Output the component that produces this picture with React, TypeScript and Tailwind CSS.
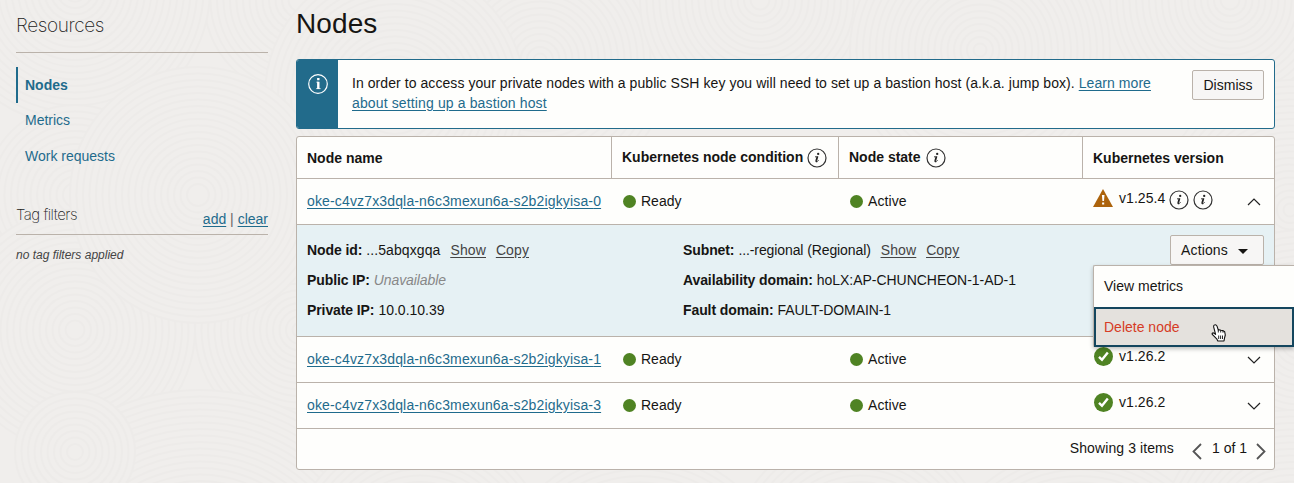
import React from "react";

const DISKS: [number, number, number][] = [
  [300, 0, 96], [75, -10, 135], [540, 60, 130], [760, 0, 120], [980, 50, 130], [1230, 0, 120],
  [395, 95, 130], [75, 195, 90], [1290, 210, 130], [300, 330, 105], [0, 330, 75],
  [75, 330, 120], [198, 195, 128], [1300, 340, 110], [200, 600, 210], [420, 560, 130], [640, 600, 150],
  [860, 560, 130], [1080, 600, 150], [1290, 540, 130], [75, 452, 60],
];

function Swirls() {
  return (
    <svg className="absolute inset-0 -z-10 h-full w-full" aria-hidden="true">
      {DISKS.map(([cx, cy, r], i) => (
        <g key={i} fill="#f0eeec" stroke="#edebe9" strokeWidth="2">
          {Array.from({ length: Math.floor(r / 6.5) }, (_, k) => (
            <circle key={k} cx={cx} cy={cy} r={r - k * 6.5} />
          ))}
        </g>
      ))}
    </svg>
  );
}

function Info() {
  return (
    <svg className="size-5 shrink-0" viewBox="0 0 20 20" fill="none">
      <circle cx="10" cy="10" r="9" stroke="#333" strokeWidth="1.2" />
      <circle cx="11.2" cy="5.9" r="1.15" fill="#222" />
      <path d="M8 9 9.4 8.5" stroke="#222" strokeWidth="0.9" />
      <path d="M10.5 8.2 9.3 12.6Q9.1 13.7 10 13.4" stroke="#222" strokeWidth="1.8" />
      <path d="M9.9 13.6Q10.9 13.3 11.7 12.2" stroke="#222" strokeWidth="0.8" />
    </svg>
  );
}

function Chevron({ up = false }: { up?: boolean }) {
  return (
    <svg className="h-2 w-[14px]" viewBox="0 0 14 8" fill="none" stroke="#222" strokeWidth="1.2">
      <path d={up ? "M1 7 7 1 13 7" : "M1 1 7 7 13 1"} />
    </svg>
  );
}

function Check() {
  return (
    <svg className="ml-px size-[19px]" viewBox="0 0 19 19">
      <circle cx="9.5" cy="9.5" r="9.5" fill="#4f8323" />
      <path d="m5 9.8 3 3L13.8 5.6" fill="none" stroke="#fff" strokeWidth="2.4" />
    </svg>
  );
}

function Warning() {
  return (
    <svg className="h-[18px] w-5" viewBox="0 0 20 18">
      <path d="M10 0 20 18H0Z" fill="#ac630c" />
      <path d="M8.9 6h2.6l-.5 6H9.4ZM9.1 13.4h2.1v2.1H9.1Z" fill="#fff" />
    </svg>
  );
}

function Status({ label }: { label: string }) {
  return (
    <span className="flex items-center gap-[5px]">
      <span className="size-[13px] rounded-full bg-[#4f8323]" />
      {label}
    </span>
  );
}

const COLS = "grid grid-cols-[314px_227px_244px_192px]";

function Row({ id, warn = false }: { id: string; warn?: boolean }) {
  return (
    <div className={`${COLS} h-[46px] items-center border-b border-[#bab2aa] pb-px`}>
      <a className="pl-[10px] tracking-[0.15px] text-[#1f6b8c] underline underline-offset-2">
        oke-c4vz7x3dqla-n6c3mexun6a-s2b2igkyisa-{id}
      </a>
      <div className="pl-[12px]"><Status label="Ready" /></div>
      <div className="pl-[12px] tracking-[0.1px]"><Status label="Active" /></div>
      <div className="flex items-center justify-between pr-[13px] pl-[11px]">
        <div className="flex items-center pb-[6px]">
          {warn ? <Warning /> : <Check />}
          <span className="ml-[6px] tracking-[0.05px]">v1.{warn ? "25.4" : "26.2"}</span>
          {warn && <span className="mt-[4px] ml-1 flex gap-1"><Info /><Info /></span>}
        </div>
        <div className="pt-px"><Chevron up={warn} /></div>
      </div>
    </div>
  );
}

function Field({ name, children }: { name: string; children: React.ReactNode }) {
  return (
    <div className="flex h-[30px] items-center gap-1 whitespace-nowrap">
      <b className="tracking-[-0.1px]">{name}:</b>
      {children}
    </div>
  );
}

function ShowCopy() {
  return (
    <span className="ml-[6px] flex gap-[10px] tracking-[0.1px] text-[#444] underline underline-offset-2">
      <a>Show</a>
      <a>Copy</a>
    </span>
  );
}

function Pointer() {
  return (
    <svg className="absolute top-[14px] left-[114px] h-[20px] w-[18px]" viewBox="0 0 18 20">
      <path
        d="M4.2 2.1C5.5 1.3 6.6 2 7 3.2L8.3 7 9 6.7 11 7.2 13 7.6 14.7 8.8 15.3 12 14.5 15.2 14 18H7.8L6.7 15.8 3 12.1C1 10.4 2.8 9.5 4.1 10.2L5.6 11.3 3.7 4.2Q3.3 2.7 4.2 2.1Z"
        fill="#fff" stroke="#111" strokeWidth="1.1" strokeLinejoin="round"
      />
      <path d="M8.3 7V9.5M10.7 7.2V9.5M13 7.7V9.7M8.7 12.5V16M10.6 12.5V16M12.5 12.5V16" stroke="#111" strokeWidth="0.9" />
    </svg>
  );
}

export default function App() {
  return (
    <div className="relative isolate flex h-[483px] w-[1294px] overflow-hidden bg-[#f0eeec] font-['Liberation_Sans',Arial,sans-serif] text-[14px] leading-5 text-[#161513]">
      <Swirls />
      <aside className="ml-4 w-[252px] shrink-0">
        <h2 className="h-[53px] border-b border-[#bab2aa] pt-[14px] font-['Inter','Roboto',sans-serif] text-[19px] leading-6 font-extralight tracking-[-0.4px] text-[#222]">
          Resources
        </h2>
        <nav className="mt-[14px] flex flex-col text-[#1f6b8c]">
          <a className="flex h-9 items-center border-l-2 border-[#1f6b8c] pl-[7px] font-bold">Nodes</a>
          <a className="flex h-9 items-center pb-[2px] pl-[9px]">Metrics</a>
          <a className="flex h-9 items-center pb-[2px] pl-[9px]">Work requests</a>
        </nav>
        <div className="mt-[29px] flex h-[31px] justify-between border-b border-[#bab2aa]">
          <h3 className="pt-px font-['Inter','Roboto',sans-serif] text-[15px] font-extralight tracking-[-0.5px] text-[#222]">Tag filters</h3>
          <div className="pt-[5px]">
            <a className="text-[#1f6b8c] underline underline-offset-2">add</a>
            <span className="text-[#666]"> | </span>
            <a className="text-[#1f6b8c] underline underline-offset-2">clear</a>
          </div>
        </div>
        <p className="mt-[10px] text-[12px] text-[#444] italic">no tag filters applied</p>
      </aside>

      <main className="ml-7 w-[979px] shrink-0">
        <h1 className="h-[59px] pt-[8px] text-[28px] leading-8 tracking-[0.1px]">Nodes</h1>
        <section className="flex h-[70px] overflow-hidden rounded-[3px] border border-[#226b8b] bg-[#fefefc]">
          <div className="flex w-[41px] justify-center bg-[#226b8b] pt-[14px]">
            <svg className="size-5" viewBox="0 0 20 20" fill="none" stroke="#fff">
              <circle cx="10" cy="10" r="9.3" strokeWidth="1.2" />
              <path d="M10.3 4v2.2M10.3 7.8V15" strokeWidth="2.4" />
              <path d="M8.4 8.2h2M8.2 14.6h4.4" strokeWidth="0.8" />
            </svg>
          </div>
          <p className="w-[854px] pt-[13px] pl-[14px] tracking-[0.065px]">
            <span>In order to access your private nodes with a public SSH key you will need to set up a bastion host (a.k.a. jump box). </span>
            <a className="text-[#1f6b8c] underline underline-offset-2">Learn more<br /><span className="tracking-[0.13px]">about setting up a bastion host</span></a>
          </p>
          <button className="mt-[10px] h-[30px] w-[72px] rounded-[2px] border border-[#bab2aa] bg-[#f7f6f5]">Dismiss</button>
        </section>

        <section className="mt-[7px] h-[334px] rounded-[3px] border border-[#bab2aa] bg-[#fefefc]">
          <div className={`${COLS} h-[42px] border-b border-[#bab2aa] font-bold`}>
            <div className="flex items-center pl-[10px]">Node name</div>
            <div className="flex items-center gap-1 border-l border-[#bab2aa] pl-[10px]"><span className="pb-[2px]">Kubernetes node condition</span><Info /></div>
            <div className="flex items-center gap-[5px] border-l border-[#bab2aa] pl-[10px]"><span className="pb-[2px]">Node state</span><Info /></div>
            <div className="flex items-center border-l border-[#bab2aa] pl-[10px]">Kubernetes version</div>
          </div>
          <Row id="0" warn />
          <div className="relative grid h-[112px] grid-cols-[376px_1fr] border-b border-[#bab2aa] bg-[#e6f1f4] pt-[10px] pl-[10px]">
            <div>
              <Field name="Node id"><span className="tracking-[0.1px]">...5abqxgqa</span><ShowCopy /></Field>
              <Field name="Public IP"><i className="tracking-[-0.1px] text-[#888]">Unavailable</i></Field>
              <Field name="Private IP">10.0.10.39</Field>
            </div>
            <div>
              <Field name="Subnet"><span className="tracking-[-0.1px]">...-regional (Regional)</span><ShowCopy /></Field>
              <Field name="Availability domain"><span className="tracking-[-0.03px]">hoLX:AP-CHUNCHEON-1-AD-1</span></Field>
              <Field name="Fault domain"><span className="tracking-[-0.1px]">FAULT-DOMAIN-1</span></Field>
            </div>
            <button className="absolute top-[10px] right-[10px] flex h-[30px] w-[94px] items-center gap-[10px] rounded-[2px] border border-[#bab2aa] bg-[#f7f6f5] pl-[10px] tracking-[0.15px]">
              Actions
              <svg className="mt-[2px] h-[5px] w-[10px]" viewBox="0 0 10 5"><path d="M0 0H10L5 5Z" fill="#161513" /></svg>
            </button>
            <div className="absolute top-[40px] left-[796px] z-10 h-[82px] w-[201px] rounded-l-[2px] border border-r-0 border-[#bab2aa] bg-[#fefefc] shadow-[0_2px_4px_rgba(0,0,0,0.25)]">
              <div className="flex h-[41px] items-center pb-[2px] pl-[10px]">View metrics</div>
              <div className="relative flex h-10 items-center border-2 border-[#14465e] bg-[#e4e1dd] pl-2 text-[#d63b25]">
                Delete node
                <Pointer />
              </div>
            </div>
          </div>
          <Row id="1" />
          <Row id="3" />
          <div className="flex h-10 items-center justify-end pr-2">
            <span className="pb-[2px] tracking-[0.1px]">Showing 3 items</span>
            <svg className="mt-1 ml-[18px] h-[17px] w-[10px]" viewBox="0 0 10 17" fill="none" stroke="#555" strokeWidth="1.8"><path d="M9 1 1.5 8.5 9 16" /></svg>
            <span className="mr-[9px] ml-[10px] pb-[2px]">1 of 1</span>
            <svg className="mt-1 h-[17px] w-[10px]" viewBox="0 0 10 17" fill="none" stroke="#555" strokeWidth="1.8"><path d="m1 1 7.5 7.5L1 16" /></svg>
          </div>
        </section>
      </main>
    </div>
  );
}
